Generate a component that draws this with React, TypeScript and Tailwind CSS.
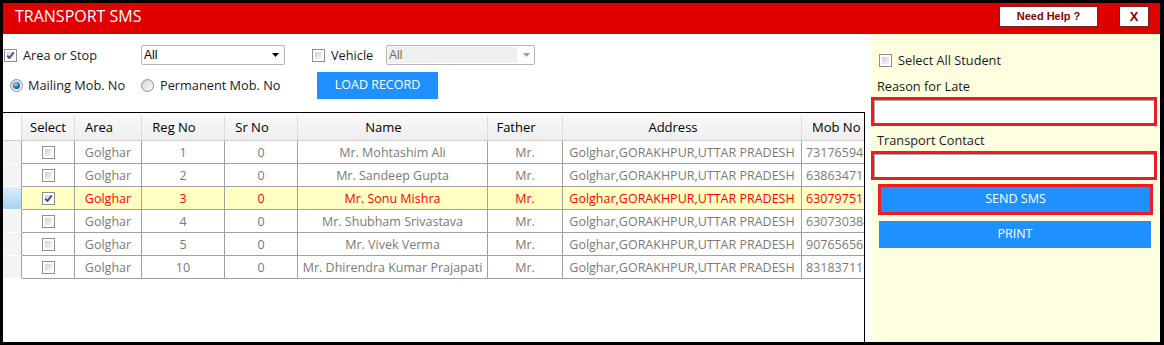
import React from 'react';

type Row = { reg: string; name: string; mob: string; selected?: boolean };

const rows: Row[] = [
  { reg: '1', name: 'Mr. Mohtashim Ali', mob: '7317659412' },
  { reg: '2', name: 'Mr. Sandeep Gupta', mob: '6386347125' },
  { reg: '3', name: 'Mr. Sonu Mishra', mob: '6307975138', selected: true },
  { reg: '4', name: 'Mr. Shubham Srivastava', mob: '6307303841' },
  { reg: '5', name: 'Mr. Vivek Verma', mob: '9076565623' },
  { reg: '10', name: 'Mr. Dhirendra Kumar Prajapati', mob: '8318371109' },
];

const Check: React.FC<{ checked?: boolean }> = ({ checked }) => (
  <span className="relative inline-flex h-[13px] w-[13px] shrink-0 items-center justify-center border border-[#8f8f8f] bg-white">
    <span className="absolute inset-[2px] bg-linear-to-br from-[#d2d2d2] to-[#f7f7f7]" />
    {checked && (
      <svg viewBox="0 0 11 11" className="relative h-[11px] w-[11px]">
        <path d="M2.2 5.6 L4.4 8 L8.8 2.4" fill="none" stroke="#2f4b8c" strokeWidth="1.7" />
      </svg>
    )}
  </span>
);

const Radio: React.FC<{ checked?: boolean }> = ({ checked }) => (
  <span className="inline-flex h-[13px] w-[13px] shrink-0 items-center justify-center rounded-full border border-[#8f8f8f] bg-linear-to-br from-[#d4d4d4] to-[#fafafa]">
    {checked && (
      <span className="h-[7px] w-[7px] rounded-full bg-[radial-gradient(circle_at_40%_35%,#9fdcff,#1f6bb5_55%,#0b3566)]" />
    )}
  </span>
);

const Arrow: React.FC<{ color: string }> = ({ color }) => (
  <svg viewBox="0 0 7 4" className="h-[4px] w-[7px]">
    <path d="M0 0 H7 L3.5 4 Z" fill={color} />
  </svg>
);

const RedInput: React.FC = () => (
  <div className="h-[29px] w-[286px] border-[3px] border-[#ed1c24] bg-white">
    <div className="h-full w-full border-t border-l border-[#a9a9a9]" />
  </div>
);

const App: React.FC = () => {
  const cell = 'flex h-full shrink-0 items-center justify-center whitespace-nowrap border-r border-b border-[#a0a0a0] pt-[2px]';
  const head = 'flex h-full shrink-0 items-center justify-center border-r border-[#dcdcdc] text-black';

  return (
    <div className="h-[345px] w-[1164px] bg-black pt-[3px] pr-[4px] pb-[3px] pl-[3px] font-['Open_Sans',sans-serif] text-[12.75px]">
      <div className="flex h-full flex-col">
        {/* title bar */}
        <div className="flex h-[31px] shrink-0 items-start justify-between bg-[#e00000] pl-[12px] pr-[11px]">
          <div className="pt-[3px] text-[16px] leading-[20px] text-white">TRANSPORT SMS</div>
          <div className="mt-[3px] flex gap-[21px] font-['Liberation_Sans',sans-serif] font-bold text-[#8b0000]">
            <button className="h-[21px] w-[99px] border border-[#7a2020] bg-white text-[11px]">Need Help ?</button>
            <button className="h-[21px] w-[30px] border border-[#7a2020] bg-white text-[13px]">X</button>
          </div>
        </div>

        <div className="flex min-h-0 flex-1">
          {/* left side */}
          <div className="flex w-[868px] shrink-0 flex-col bg-white">
            <div className="h-[78px] shrink-0">
              <div className="mt-[11px] flex h-[20px] items-center">
                <div className="flex w-[138px] items-center pl-[1px]">
                  <Check checked />
                  <span className="ml-[6px] pt-[1px] text-[#1a1a1a]">Area or Stop</span>
                </div>
                <div className="flex h-[20px] w-[144px] items-center justify-between rounded-[2px] border border-[#b5b5b5] bg-white pl-[2px] pr-[5px]">
                  <span className="font-['Liberation_Sans',sans-serif] text-[12px] text-black">All</span>
                  <Arrow color="#000" />
                </div>
                <div className="ml-[27px] flex w-[74px] items-center">
                  <Check />
                  <span className="ml-[6px] pt-[1px] text-[#1a1a1a]">Vehicle</span>
                </div>
                <div className="flex h-[20px] w-[149px] items-center rounded-[2px] border border-[#b5b5b5] bg-white p-[1px]">
                  <div className="flex h-full w-[129px] items-center bg-[#efefef] pl-[1px] font-['Liberation_Sans',sans-serif] text-[12px] text-[#6d6d6d]">All</div>
                  <div className="flex flex-1 justify-center pl-[2px]">
                    <Arrow color="#9d9d9d" />
                  </div>
                </div>
              </div>
              <div className="mt-[7px] flex h-[27px] items-center">
                <div className="flex w-[138px] items-center pl-[7px]">
                  <Radio checked />
                  <span className="ml-[5px] pt-[1px] text-[#1a1a1a]">Mailing Mob. No</span>
                </div>
                <div className="flex w-[176px] items-center">
                  <Radio />
                  <span className="ml-[6px] pt-[1px] text-[#1a1a1a]">Permanent Mob. No</span>
                </div>
                <button className="h-[27px] w-[121px] bg-[#1e90ff] text-[12.5px] text-white">LOAD RECORD</button>
              </div>
            </div>

            {/* grid */}
            <div className="min-h-0 w-[862px] flex-1 overflow-hidden border-t border-r border-black bg-white text-[12.5px]">
              <div className="flex h-[28px] w-max border-b border-[#d0d0d0] bg-linear-to-b from-[#fafafa] to-[#eeeeee] pt-[3px] text-[13px]">
                <div className="h-full w-[19px] shrink-0 border-r border-[#dcdcdc] bg-white" />
                <div className={`${head} w-[53px]`}>Select</div>
                <div className={`${head} w-[67px] pr-[18px]`}>Area</div>
                <div className={`${head} w-[83px] pr-[18px]`}>Reg No</div>
                <div className={`${head} w-[73px] pr-[18px]`}>Sr No</div>
                <div className={`${head} w-[190px] pr-[18px]`}>Name</div>
                <div className={`${head} w-[75px] pr-[18px]`}>Father</div>
                <div className={`${head} w-[239px] pr-[18px]`}>Address</div>
                <div className="flex h-full w-[80px] shrink-0 items-center pl-[10px] text-black">Mob No</div>
              </div>
              {rows.map((r) => {
                const tone = r.selected ? 'bg-[#ffffc4] text-[#ff0000]' : 'bg-white text-[#7a7a7a]';
                return (
                  <div key={r.reg} className={`flex h-[23px] w-max ${tone}`}>
                    <div
                      className={`h-full w-[19px] shrink-0 border-r border-b border-r-[#a0a0a0] border-b-[#ffffff] ${
                        r.selected ? 'bg-linear-to-b from-[#dcedfc] to-[#a7d2f4]' : 'bg-[#f4f4f4]'
                      }`}
                    />
                    <div className={`${cell} w-[53px] !pt-0`}>
                      <Check checked={r.selected} />
                    </div>
                    <div className={`${cell} w-[67px]`}>Golghar</div>
                    <div className={`${cell} w-[83px]`}>{r.reg}</div>
                    <div className={`${cell} w-[73px]`}>0</div>
                    <div className={`${cell} w-[190px]`}>{r.name}</div>
                    <div className={`${cell} w-[75px]`}>Mr.</div>
                    <div className={`${cell} w-[239px]`}>Golghar,GORAKHPUR,UTTAR PRADESH</div>
                    <div className="flex h-full w-[80px] shrink-0 items-center whitespace-nowrap border-b border-[#a0a0a0] pt-[2px] pl-[4px]">
                      {r.mob}
                    </div>
                  </div>
                );
              })}
            </div>
          </div>

          {/* right panel */}
          <div className="flex flex-1 flex-col bg-[#ffffe0]">
            <div className="mt-[20px] flex h-[13px] items-center pl-[8px]">
              <Check />
              <span className="ml-[6px] pt-[1px] text-[#1a1a1a]">Select All Student</span>
            </div>
            <div className="mt-[11px] pl-[6px] leading-[16px] text-[#1a1a1a]">Reason for Late</div>
            <div className="mt-[3px]">
              <RedInput />
            </div>
            <div className="mt-[6px] pl-[6px] leading-[16px] text-[#1a1a1a]">Transport Contact</div>
            <div className="mt-[3px]">
              <RedInput />
            </div>
            <div className="mt-[4px] ml-[7px] h-[31px] w-[275px] border-[3px] border-[#ed1c24]">
              <button className="h-full w-full bg-[#1e90ff] text-[12.5px] text-white">SEND SMS</button>
            </div>
            <button className="mt-[6px] ml-[8px] h-[27px] w-[272px] bg-[#1e90ff] text-[12.5px] text-white">PRINT</button>
          </div>
        </div>
      </div>
    </div>
  );
};

export default App;
